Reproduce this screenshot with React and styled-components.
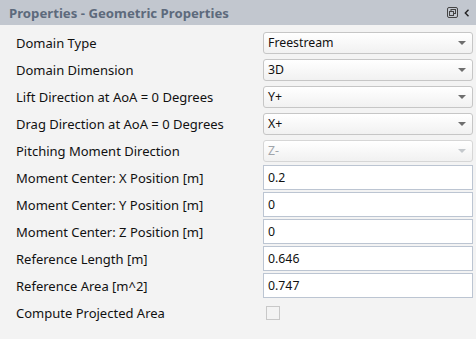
import React from "react";
import styled, { createGlobalStyle } from "styled-components";

const Global = createGlobalStyle`
  html, body { margin: 0; padding: 0; background: #f3f3f3; }
  body { font-family: "Noto Sans", "Open Sans", sans-serif; }
`;

const Panel = styled.div`
  width: 476px;
  height: 339px;
  background: #f3f3f3;
  display: flex;
  flex-direction: column;
  overflow: hidden;
`;

const Header = styled.div`
  height: 25px;
  flex: none;
  background: #c2c7cf;
  display: flex;
  align-items: center;
  padding: 0 6px 0 9px;
  gap: 6px;
`;

const Title = styled.div`
  flex: 1;
  font-weight: bold;
  font-size: 13.2px;
  color: #5d6a7c;
  white-space: nowrap;
`;

const IconBtn = styled.span`
  display: inline-flex;
  align-items: center;
  justify-content: center;
  color: #333;
`;

const Body = styled.div`
  display: grid;
  grid-template-columns: 247px 210px;
  grid-auto-rows: 27px;
  padding: 4px 0 0 16px;
`;

const Label = styled.div`
  display: flex;
  align-items: center;
  font-size: 13px;
  color: #111;
  white-space: nowrap;
`;

const Cell = styled.div`
  display: flex;
  align-items: center;
`;

const Select = styled.div`
  box-sizing: border-box;
  width: 210px;
  height: 22px;
  border: 1px solid ${(p) => (p.$disabled ? "#d6d6d6" : "#c6c6c6")};
  border-radius: 3px;
  background: linear-gradient(#ffffff, #f1f1f1);
  display: flex;
  align-items: center;
  padding: 0 6px 0 4px;
  font-size: 12.3px;
  color: ${(p) => (p.$disabled ? "#a0a4aa" : "#111")};
`;

const SelectText = styled.span`
  flex: 1;
`;

const Arrow = styled.span`
  width: 0;
  height: 0;
  border-left: 4px solid transparent;
  border-right: 4px solid transparent;
  border-top: 4px solid ${(p) => (p.$disabled ? "#c4c8cc" : "#6e6e6e")};
`;

const Input = styled.div`
  box-sizing: border-box;
  width: 210px;
  height: 25px;
  border: 1px solid #bcc5d2;
  background: #fff;
  display: flex;
  align-items: center;
  padding: 0 4px;
  font-size: 12.3px;
  color: #111;
`;

const Check = styled.div`
  box-sizing: border-box;
  width: 14px;
  height: 14px;
  margin-left: 3px;
  border: 1px solid #c8c8c8;
  background: #f3f3f3;
`;

const rows = [
  ["Domain Type", "select", "Freestream"],
  ["Domain Dimension", "select", "3D"],
  ["Lift Direction at AoA = 0 Degrees", "select", "Y+"],
  ["Drag Direction at AoA = 0 Degrees", "select", "X+"],
  ["Pitching Moment Direction", "disabled", "Z-"],
  ["Moment Center: X Position [m]", "input", "0.2"],
  ["Moment Center: Y Position [m]", "input", "0"],
  ["Moment Center: Z Position [m]", "input", "0"],
  ["Reference Length [m]", "input", "0.646"],
  ["Reference Area [m^2]", "input", "0.747"],
  ["Compute Projected Area", "check", ""],
];

export default function App() {
  return (
    <>
      <Global />
      <Panel>
        <Header>
          <Title>Properties - Geometric Properties</Title>
          <IconBtn>
            <svg width="11" height="11" viewBox="0 0 11 11">
              <rect x="0.5" y="0.5" width="10" height="10" rx="1.5" fill="none" stroke="#444" />
              <rect x="4" y="2.5" width="4.5" height="4" fill="none" stroke="#444" />
              <rect x="2.5" y="4.5" width="4" height="4" fill="#c2c7cf" stroke="#444" />
            </svg>
          </IconBtn>
          <IconBtn>
            <svg width="6" height="8" viewBox="0 0 6 8">
              <path d="M4.5 0.8 L1.3 4 L4.5 7.2" fill="none" stroke="#222" strokeWidth="1.4" />
            </svg>
          </IconBtn>
        </Header>
        <Body>
          {rows.map(([label, kind, value]) => (
            <React.Fragment key={label}>
              <Label>{label}</Label>
              <Cell>
                {kind === "select" && (
                  <Select>
                    <SelectText>{value}</SelectText>
                    <Arrow />
                  </Select>
                )}
                {kind === "disabled" && (
                  <Select $disabled>
                    <SelectText>{value}</SelectText>
                    <Arrow $disabled />
                  </Select>
                )}
                {kind === "input" && <Input>{value}</Input>}
                {kind === "check" && <Check />}
              </Cell>
            </React.Fragment>
          ))}
        </Body>
      </Panel>
    </>
  );
}
